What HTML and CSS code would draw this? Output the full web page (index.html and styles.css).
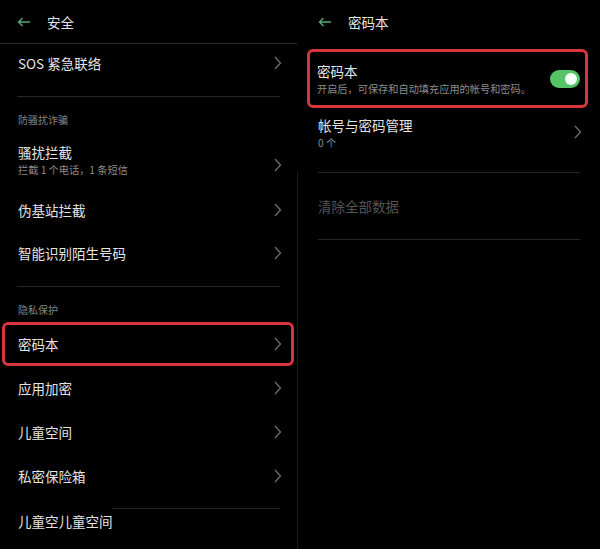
FILE: index.html
```html
<!DOCTYPE html>
<html>
<head>
	<meta charset="utf-8">
	<title>安全 / 密码本</title>
	<link rel="stylesheet" href="styles.css">
</head>
<body>
<div class="screens">

	<!-- left screen: 安全 -->
	<div class="panel panel_left">
		<div class="top_bar">
			<svg class="back" width="14" height="10" viewBox="0 0 14 10"><path d="M13 5H1.5M5.5 1L1.5 5l4 4" fill="none" stroke="#5aa678" stroke-width="1.4"/></svg>
			<span class="top_title">安全</span>
		</div>

		<div class="row row_sos">
			<span class="row_title">SOS 紧急联络</span>
			<svg class="chev" width="8" height="14" viewBox="0 0 8 14"><path d="M1 1l5.5 6L1 13" fill="none" stroke="#6e6e6e" stroke-width="1.3"/></svg>
		</div>
		<div class="line"></div>

		<div class="label">防骚扰诈骗</div>
		<div class="row row_two">
			<div>
				<div class="row_title">骚扰拦截</div>
				<div class="row_sub">拦截 1 个电话，1 条短信</div>
			</div>
			<svg class="chev" width="8" height="14" viewBox="0 0 8 14"><path d="M1 1l5.5 6L1 13" fill="none" stroke="#6e6e6e" stroke-width="1.3"/></svg>
		</div>
		<div class="row">
			<span class="row_title">伪基站拦截</span>
			<svg class="chev" width="8" height="14" viewBox="0 0 8 14"><path d="M1 1l5.5 6L1 13" fill="none" stroke="#6e6e6e" stroke-width="1.3"/></svg>
		</div>
		<div class="row">
			<span class="row_title">智能识别陌生号码</span>
			<svg class="chev" width="8" height="14" viewBox="0 0 8 14"><path d="M1 1l5.5 6L1 13" fill="none" stroke="#6e6e6e" stroke-width="1.3"/></svg>
		</div>
		<div class="line line_low"></div>

		<div class="label label_small">隐私保护</div>
		<div class="row row_marked">
			<span class="row_title">密码本</span>
			<svg class="chev" width="8" height="14" viewBox="0 0 8 14"><path d="M1 1l5.5 6L1 13" fill="none" stroke="#6e6e6e" stroke-width="1.3"/></svg>
		</div>
		<div class="row row_tall">
			<span class="row_title">应用加密</span>
			<svg class="chev" width="8" height="14" viewBox="0 0 8 14"><path d="M1 1l5.5 6L1 13" fill="none" stroke="#6e6e6e" stroke-width="1.3"/></svg>
		</div>
		<div class="row row_tall">
			<span class="row_title">儿童空间</span>
			<svg class="chev" width="8" height="14" viewBox="0 0 8 14"><path d="M1 1l5.5 6L1 13" fill="none" stroke="#6e6e6e" stroke-width="1.3"/></svg>
		</div>
		<div class="row row_tall">
			<span class="row_title">私密保险箱</span>
			<svg class="chev" width="8" height="14" viewBox="0 0 8 14"><path d="M1 1l5.5 6L1 13" fill="none" stroke="#6e6e6e" stroke-width="1.3"/></svg>
		</div>
		<div class="line line_short"></div>
		<div class="row row_last">
			<span class="row_title">儿童空儿童空间</span>
		</div>
	</div>

	<!-- right screen: 密码本 -->
	<div class="panel panel_right">
		<div class="top_bar top_bar_right">
			<svg class="back" width="14" height="10" viewBox="0 0 14 10"><path d="M13 5H1.5M5.5 1L1.5 5l4 4" fill="none" stroke="#5aa678" stroke-width="1.4"/></svg>
			<span class="top_title">密码本</span>
		</div>

		<div class="switch_box">
			<div>
				<div class="row_title">密码本</div>
				<div class="row_sub">开启后，可保存和自动填充应用的帐号和密码。</div>
			</div>
			<div class="toggle"><div class="knob"></div></div>
		</div>

		<div class="row row_account">
			<div>
				<div class="row_title">帐号与密码管理</div>
				<div class="row_sub">0 个</div>
			</div>
			<svg class="chev" width="8" height="14" viewBox="0 0 8 14"><path d="M1 1l5.5 6L1 13" fill="none" stroke="#6e6e6e" stroke-width="1.3"/></svg>
		</div>

		<div class="lower">
			<div class="line line_right"></div>
			<div class="clear_row">清除全部数据</div>
			<div class="line line_right"></div>
		</div>
	</div>

</div>
</body>
</html>
```

FILE: styles.css
```css
body
{
	margin: 0;
	background-color: #000000;
	font-family: "Noto Sans CJK SC", "Noto Sans", sans-serif;
	color: #e4e4e4;
}
.screens
{
	display: flex;
	width: 600px;
	height: 549px;
	overflow: hidden;
}
.panel
{
	display: flex;
	flex-direction: column;
}
.panel_left
{
	width: 297px;
}
.panel_right
{
	flex: 1;
}
.top_bar
{
	height: 43px;
	display: flex;
	align-items: center;
	padding-left: 17px;
	border-bottom: 1px solid #2a2a2a;
}
.top_bar_right
{
	height: 44px;
	border-bottom: none;
	padding-left: 21px;
}
.back
{
	display: block;
	flex-shrink: 0;
}
.top_title
{
	margin-left: 16px;
	font-size: 13.5px;
	line-height: 20px;
}
.row
{
	display: flex;
	align-items: center;
	justify-content: space-between;
	height: 43px;
	padding: 0 15px 0 18px;
	box-sizing: border-box;
}
.row_title
{
	font-size: 13.5px;
	line-height: 20px;
	white-space: nowrap;
}
.row_sub
{
	font-size: 10.2px;
	line-height: 16px;
	color: #8c8c8c;
	white-space: nowrap;
}
.chev
{
	display: block;
	flex-shrink: 0;
}
.row_sos
{
	height: 38px;
	margin-bottom: 14px;
}
.row_two
{
	height: 51px;
	align-items: flex-start;
	padding-top: 5px;
}
.row_two .chev
{
	margin-top: 16px;
}
.row_tall
{
	height: 44px;
}
.row_marked
{
	height: 44px;
	margin: 0 3px 0 2px;
	border: 3px solid #d6363c;
	border-radius: 6px;
	padding: 0 9px 0 13px;
}
.row_last
{
	height: 24px;
}
.line
{
	height: 1px;
	background-color: #262626;
	margin: 0 17px;
}
.line_low
{
	margin-top: 12px;
}
.line_short
{
	margin: 10px 17px 0 112px;
}
.label
{
	height: 40px;
	box-sizing: border-box;
	padding: 16px 0 0 18px;
	font-size: 10px;
	line-height: 14px;
	color: #858585;
}
.label_small
{
	height: 35px;
}
.switch_box
{
	display: flex;
	align-items: center;
	justify-content: space-between;
	height: 59px;
	box-sizing: border-box;
	margin: 5px 12px 0 10px;
	border: 3px solid #d6363c;
	border-radius: 6px;
	padding: 0 5px 0 7px;
}
.toggle
{
	width: 30px;
	height: 18px;
	border-radius: 9px;
	background-color: #55c466;
	display: flex;
	align-items: center;
	justify-content: flex-end;
	padding-right: 3px;
	box-sizing: border-box;
}
.knob
{
	width: 12px;
	height: 12px;
	border-radius: 50%;
	background-color: #f4fff5;
}
.row_account
{
	height: 64px;
	padding: 7px 18px 0 21px;
	align-items: flex-start;
}
.row_account .chev
{
	margin-top: 10px;
}
.lower
{
	flex: 1;
	border-left: 1px solid #1c1c1c;
}
.line_right
{
	margin: 0 20px 0 20px;
}
.clear_row
{
	height: 66px;
	display: flex;
	align-items: center;
	padding-left: 20px;
	font-size: 13.5px;
	color: #555555;
}
```
